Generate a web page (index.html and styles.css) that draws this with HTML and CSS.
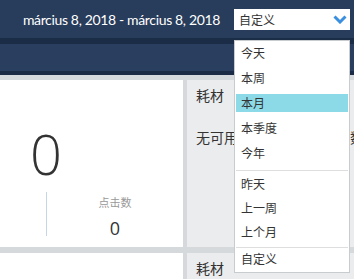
FILE: index.html
```html
<!DOCTYPE html>
<html lang="hu">
<head>
    <meta charset="UTF-8">
    <meta name="viewport" content="width=device-width, initial-scale=1.0">
    <title>报表</title>
    <link rel="stylesheet" href="styles.css">
</head>
<body>
    <div class="topbar">
        <span class="range">március 8, 2018 - március 8, 2018</span>
        <div class="picker">
            <div class="select">
                <span>自定义</span>
                <svg class="chevron" width="14" height="9" viewBox="0 0 14 9">
                    <path d="M1.5 1.5 L7 7 L12.5 1.5" fill="none" stroke="#3a8fe0" stroke-width="3"/>
                </svg>
            </div>
            <div class="menu">
                <ul class="group first">
                    <li>今天</li>
                    <li>本周</li>
                    <li class="on">本月</li>
                    <li>本季度</li>
                    <li>今年</li>
                </ul>
                <ul class="group second">
                    <li>昨天</li>
                    <li>上一周</li>
                    <li>上个月</li>
                </ul>
                <ul class="group last">
                    <li>自定义</li>
                </ul>
            </div>
        </div>
    </div>
    <div class="subnav"></div>

    <div class="main">
        <div class="card">
            <div class="big">0</div>
            <div class="stats">
                <div class="spacer"></div>
                <div class="stat">
                    <div class="label">点击数</div>
                    <div class="value">0</div>
                </div>
            </div>
        </div>
        <div class="panel">
            <div class="title">耗材</div>
            <div class="empty">无可用于当前时间范围的数据</div>
        </div>
        <div class="card"></div>
        <div class="panel">
            <div class="title">耗材</div>
        </div>
    </div>
</body>
</html>
```

FILE: styles.css
```css
body {
    margin: 0;
    width: 354px;
    height: 279px;
    overflow: hidden;
    font-family: "Open Sans", "Noto Sans CJK SC", sans-serif;
    color: #333;
    background: #d6d9db;
}
.topbar {
    display: flex;
    justify-content: flex-end;
    align-items: center;
    height: 38px;
    padding-right: 4px;
    background: #283c5b;
}
.range {
    margin-right: 14px;
    font-family: "Lato", sans-serif;
    font-size: 14px;
    letter-spacing: -0.35px;
    color: #fff;
}
.picker {
    position: relative;
}
.select {
    display: flex;
    justify-content: space-between;
    align-items: center;
    box-sizing: border-box;
    width: 116px;
    height: 21px;
    padding: 0 3px 0 5px;
    background: #fff;
    font-family: "Noto Sans CJK SC", sans-serif;
    font-size: 12px;
}
.chevron {
    display: block;
}
/* 下拉菜单 */
.menu {
    position: absolute;
    top: 31px;
    left: 0;
    z-index: 2;
    box-sizing: border-box;
    width: 116px;
    padding: 0 1px;
    border: 1px solid #c9cccf;
    background: #fff;
    font-family: "Noto Sans CJK SC", sans-serif;
    font-size: 12px;
}
.group {
    display: flex;
    flex-direction: column;
    margin: 0;
    padding: 0;
    list-style: none;
}
.group li {
    height: 18px;
    padding-left: 5px;
    line-height: 18px;
}
.group li.on {
    background: #8cdae8;
}
.first {
    gap: 7px;
    padding: 3px 0 8px;
    border-bottom: 1px solid #dcdedf;
}
.second {
    gap: 6px;
    padding: 4px 0 6px;
    border-bottom: 1px solid #dcdedf;
}
.last {
    padding: 2px 0 4px;
}
.subnav {
    height: 27px;
    border-top: 6px solid #1b2c47;
    border-bottom: 4px solid #1b2b45;
    background: #2a3f5f;
}
.main {
    display: grid;
    grid-template-columns: 183px 1fr;
    grid-template-rows: 167px 26px;
    column-gap: 4px;
    row-gap: 6px;
    padding-top: 5px;
}
.card {
    background: #fff;
}
.big {
    width: 92px;
    margin-top: 45px;
    font-size: 56px;
    font-weight: 300;
    line-height: 56px;
    text-align: center;
}
.stats {
    display: flex;
    margin-top: 11px;
}
.spacer {
    width: 46px;
}
.stat {
    flex: 1;
    padding-top: 2px;
    border-left: 1px solid #c6d6e8;
    text-align: center;
}
.label {
    font-family: "Noto Sans CJK SC", sans-serif;
    font-size: 11px;
    line-height: 16px;
    color: #999;
}
.value {
    margin-top: 10px;
    font-size: 18px;
    line-height: 16px;
}
.panel {
    padding: 5px 0 0 9px;
    overflow: hidden;
    background: #ebeced;
    font-family: "Noto Sans CJK SC", sans-serif;
    font-size: 14px;
}
.title {
    line-height: 20px;
}
.empty {
    margin-top: 22px;
    line-height: 20px;
    white-space: nowrap;
}
```
